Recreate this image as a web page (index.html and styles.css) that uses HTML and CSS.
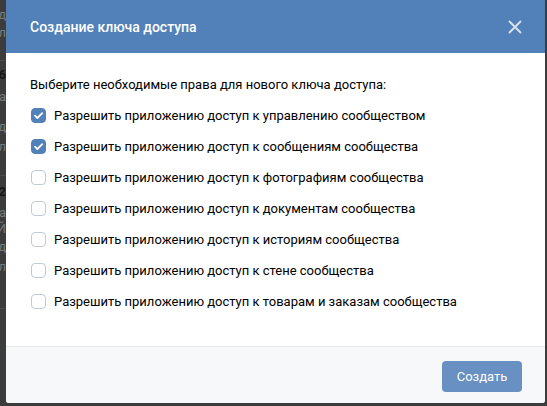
FILE: index.html
```html
<!DOCTYPE html>
<html lang="ru">
<head>
<meta charset="utf-8">
<title>Создание ключа доступа</title>
<link rel="stylesheet" href="styles.css">
</head>
<body>
<div class="page">
  <div class="backdrop" aria-hidden="true">
    <div class="bl">зд</div>
    <div class="bl">ал</div>
    <div class="sep s1"></div>
    <div class="bl bold g2">е6</div>
    <div class="bl m4">а</div>
    <div class="bl m12">зд</div>
    <div class="bl m2">ал</div>
    <div class="sep s2"></div>
    <div class="bl bold g3">52</div>
    <div class="bl m3">а</div>
    <div class="bl tight">Й</div>
    <div class="bl">зд</div>
    <div class="bl m2">ал</div>
    <div class="sep s3"></div>
  </div>
  <div class="modal">
    <div class="modal-header">
      <div class="modal-title">Создание ключа доступа</div>
      <svg class="close" width="14" height="14" viewBox="0 0 14 14"><path d="M1.5 1.5 L12.5 12.5 M12.5 1.5 L1.5 12.5" stroke="#dbe5f1" stroke-width="1.8" stroke-linecap="round"/></svg>
    </div>
    <div class="modal-body">
      <div class="prompt">Выберите необходимые права для нового ключа доступа:</div>
      <div class="options">
        <div class="option"><span class="cb checked"><svg width="15" height="15" viewBox="0 0 15 15"><path d="M4 7.6 L6.4 10 L11.2 5.2" fill="none" stroke="#fff" stroke-width="1.8" stroke-linecap="round" stroke-linejoin="round"/></svg></span><span class="label">Разрешить приложению доступ к управлению сообществом</span></div>
        <div class="option"><span class="cb checked"><svg width="15" height="15" viewBox="0 0 15 15"><path d="M4 7.6 L6.4 10 L11.2 5.2" fill="none" stroke="#fff" stroke-width="1.8" stroke-linecap="round" stroke-linejoin="round"/></svg></span><span class="label">Разрешить приложению доступ к сообщениям сообщества</span></div>
        <div class="option"><span class="cb"></span><span class="label">Разрешить приложению доступ к фотографиям сообщества</span></div>
        <div class="option"><span class="cb"></span><span class="label">Разрешить приложению доступ к документам сообщества</span></div>
        <div class="option"><span class="cb"></span><span class="label">Разрешить приложению доступ к историям сообщества</span></div>
        <div class="option"><span class="cb"></span><span class="label">Разрешить приложению доступ к стене сообщества</span></div>
        <div class="option"><span class="cb"></span><span class="label">Разрешить приложению доступ к товарам и заказам сообщества</span></div>
      </div>
    </div>
    <div class="modal-footer">
      <button class="btn">Создать</button>
    </div>
  </div>
</div>
</body>
</html>
```

FILE: styles.css
```css
html, body {
  margin: 0;
  padding: 0;
}
body {
  background: #3c3c3c;
  font-family: Roboto, "Noto Sans", "Liberation Sans", sans-serif;
  width: 547px;
  height: 406px;
  overflow: hidden;
}
.page {
  display: flex;
  align-items: flex-start;
  width: 547px;
  height: 406px;
}
.backdrop {
  width: 6px;
  flex: none;
  display: flex;
  flex-direction: column;
  overflow: hidden;
  padding-top: 6px;
}
.bl {
  display: flex;
  justify-content: flex-end;
  white-space: nowrap;
  font-size: 13px;
  line-height: 18px;
  color: #7a7a7a;
}
.bl.bold {
  color: #161616;
  font-weight: 700;
}
.g2 { margin-top: 5px; }
.g3 { margin-top: 7px; }
.m2 { margin-top: 2px; }
.m3 { margin-top: 3px; }
.m4 { margin-top: 4px; }
.m12 { margin-top: 12px; }
.bl.tight {
  margin-top: -2px;
}
.sep {
  height: 1px;
  background: #4b4b4b;
}
.s1 { margin-top: 18px; }
.s2 { margin-top: 19px; }
.s3 { margin-top: 32px; }
.modal {
  width: 539px;
  height: 403px;
  flex: none;
  background: #fff;
  border-radius: 0 0 3px 3px;
  display: flex;
  flex-direction: column;
  overflow: hidden;
}
.modal-header {
  height: 53px;
  flex: none;
  background: #5181b8;
  display: flex;
  align-items: center;
  justify-content: space-between;
  padding: 0 23px 0 24px;
}
.modal-title {
  color: #fff;
  font-size: 14px;
  font-weight: 500;
  line-height: 18px;
  padding-top: 1px;
}
.close {
  display: block;
}
.modal-body {
  flex: 1;
  padding: 24px 24px 0 24px;
  color: #000;
  font-size: 13px;
}
.prompt {
  line-height: 16px;
  color: #000;
}
.options {
  display: flex;
  flex-direction: column;
  margin-top: 7px;
}
.option {
  height: 31px;
  display: flex;
  align-items: center;
  gap: 8px;
}
.cb {
  width: 15px;
  height: 15px;
  box-sizing: border-box;
  border: 1px solid #c0cad5;
  border-radius: 4px;
  background: #fff;
  flex: none;
  margin-left: 1px;
  position: relative;
}
.cb.checked {
  border-color: #5181b8;
  background: #5181b8;
}
.cb svg {
  position: absolute;
  left: -1px;
  top: -1px;
}
.label {
  line-height: 16px;
  color: #000;
}
.modal-footer {
  height: 57px;
  flex: none;
  box-sizing: border-box;
  background: #f7f8fa;
  border-top: 1px solid #e7e8ec;
  display: flex;
  align-items: center;
  justify-content: flex-end;
  padding: 0 23px 0 0;
}
.btn {
  width: 80px;
  height: 31px;
  border: none;
  border-radius: 4px;
  background: #6890c2;
  color: #fff;
  font-family: Roboto, "Noto Sans", "Liberation Sans", sans-serif;
  font-size: 13px;
  padding: 0;
  margin-top: 2px;
}
```
